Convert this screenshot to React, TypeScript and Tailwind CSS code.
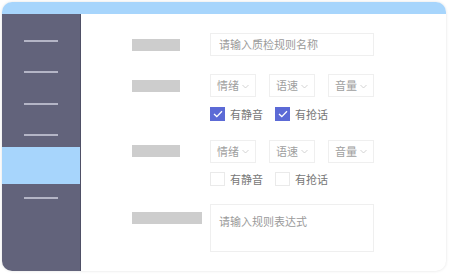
import React from "react";

const font = { fontFamily: '"Noto Sans CJK SC", "Noto Sans", sans-serif' };

const Chevron: React.FC = () => (
  <svg width="7" height="5" viewBox="0 0 7 5" className="ml-[3px] mt-[1px]">
    <path d="M0.5 1 L3.5 4 L6.5 1" fill="none" stroke="#c8c8c8" strokeWidth="0.8" />
  </svg>
);

const Select: React.FC<{ label: string }> = ({ label }) => (
  <div className="w-[46px] h-[23px] border border-[#efefef] flex items-center justify-center text-[11px] text-[#a0a0a0]">
    {label}
    <Chevron />
  </div>
);

const Check: React.FC<{ label: string; checked: boolean }> = ({ label, checked }) => (
  <div className="flex items-center w-[65px]">
    {checked ? (
      <div className="w-[15px] h-[14px] bg-[#5c6ad6] flex items-center justify-center">
        <svg width="10" height="8" viewBox="0 0 10 8">
          <path d="M1 4 L3.8 6.6 L9 1.2" fill="none" stroke="#fff" strokeWidth="1.3" />
        </svg>
      </div>
    ) : (
      <div className="w-[15px] h-[14px] border border-[#eaeaea] bg-white" />
    )}
    <span className="ml-[5px] text-[11px] text-[#777]">{label}</span>
  </div>
);

const Label: React.FC<{ wide?: boolean }> = ({ wide }) => (
  <div className={`${wide ? "w-[70px]" : "w-[48px]"} h-[12px] bg-[#cdcdcd] shrink-0`} />
);

const SideLine: React.FC<{ mt: string }> = ({ mt }) => (
  <div className={`${mt} mx-auto w-[34px] h-[2px] bg-[#b4b5c6]`} />
);

const App: React.FC = () => {
  return (
    <div className="w-[450px] h-[274px] bg-white pt-[2px] pl-[2px]" style={font}>
      <div className="w-[444px] h-[269px] rounded-[10px] overflow-hidden flex flex-col bg-white shadow-[0_0_3px_rgba(0,0,0,0.12)]">
        <div className="h-[12px] bg-[#a7d5fc] shrink-0" />
        <div className="flex flex-1">
          <div className="w-[79px] bg-[#62637b] border-r border-[#4f5066] flex flex-col">
            <SideLine mt="mt-[26px]" />
            <SideLine mt="mt-[29px]" />
            <SideLine mt="mt-[30px]" />
            <SideLine mt="mt-[29px]" />
            <div className="mt-[11px] h-[37px] bg-[#a7d5fc]" />
            <SideLine mt="mt-[13px]" />
          </div>
          <div className="flex-1 pl-[51px] pt-[19px]">
            <div className="flex items-center h-[23px]">
              <Label />
              <div className="ml-[30px] w-[164px] h-[23px] border border-[#efefef] flex items-center pl-[8px] text-[11px] text-[#9a9a9a]">
                请输入质检规则名称
              </div>
            </div>
            <div className="flex items-center h-[23px] mt-[18px]">
              <Label />
              <div className="ml-[30px] flex gap-[13px]">
                <Select label="情绪" />
                <Select label="语速" />
                <Select label="音量" />
              </div>
            </div>
            <div className="flex mt-[9px] ml-[78px]">
              <Check label="有静音" checked />
              <Check label="有抢话" checked />
            </div>
            <div className="flex items-center h-[23px] mt-[17px]">
              <Label />
              <div className="ml-[30px] flex gap-[13px]">
                <Select label="情绪" />
                <Select label="语速" />
                <Select label="音量" />
              </div>
            </div>
            <div className="flex mt-[8px] ml-[78px]">
              <Check label="有静音" checked={false} />
              <Check label="有抢话" checked={false} />
            </div>
            <div className="flex items-start mt-[25px]">
              <Label wide />
              <div className="ml-[8px] -mt-[8px] w-[164px] h-[48px] border border-[#efefef] pl-[8px] pt-[8px] text-[11px] text-[#9a9a9a]">
                请输入规则表达式
              </div>
            </div>
          </div>
        </div>
      </div>
    </div>
  );
};

export default App;
